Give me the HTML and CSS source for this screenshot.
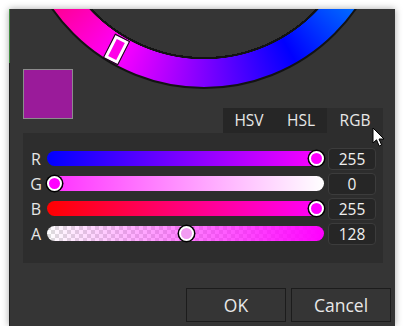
FILE: index.html
```html
<!DOCTYPE html>
<html>
<head>
<meta charset="utf-8">
<link rel="stylesheet" href="styles.css">
</head>
<body>
<div class="dialog">
  <div class="wheel-area">
    <div class="ring"></div>
    <div class="marker"></div>
  </div>
  <div class="head-row">
    <div class="swatch"></div>
    <div class="tabs">
      <div class="tab">HSV</div>
      <div class="tab">HSL</div>
      <div class="tab active">RGB</div>
    </div>
  </div>
  <div class="panel">
    <div class="row">
      <div class="lbl">R</div>
      <div class="track t-r"><span class="thumb" style="left: 269.5px"></span></div>
      <div class="val">255</div>
    </div>
    <div class="row">
      <div class="lbl">G</div>
      <div class="track t-g"><span class="thumb" style="left: 7.5px"></span></div>
      <div class="val">0</div>
    </div>
    <div class="row">
      <div class="lbl">B</div>
      <div class="track t-b"><span class="thumb" style="left: 269.5px"></span></div>
      <div class="val">255</div>
    </div>
    <div class="row">
      <div class="lbl">A</div>
      <div class="track t-a"><span class="thumb light" style="left: 139px"></span></div>
      <div class="val">128</div>
    </div>
  </div>
  <div class="footer">
    <button class="btn">OK</button>
    <button class="btn">Cancel</button>
  </div>
  <svg class="cursor" width="14" height="21" viewBox="0 0 14 21">
    <path d="M1 1 L1 16 L4.5 12.8 L7.2 19 L9.6 18 L7 12 L12 12 Z" fill="#fff" stroke="#000" stroke-width="1" stroke-linejoin="round"/>
  </svg>
</div>
</body>
</html>
```
FILE: styles.css
```css
html, body {
  margin: 0;
  padding: 0;
  background: #ffffff;
}
body {
  font-family: "Open Sans", "Noto Sans", sans-serif;
  color: #e6e6e6;
}
.dialog {
  position: relative;
  box-sizing: border-box;
  width: 386px;
  height: 317px;
  margin: 9px 0 0 9px;
  background: #353535;
  box-shadow: 0 0 7px rgba(0, 0, 0, 0.35);
  overflow: hidden;
}
.dialog::before {
  content: "";
  position: absolute;
  left: 0;
  top: 0;
  width: 1px;
  height: 100%;
  background: linear-gradient(to bottom, #3f8a3f 0 54px, #222 54px);
  z-index: 3;
}
.wheel-area {
  position: relative;
  display: flow-root;
  height: 60px;
}
.ring {
  box-sizing: border-box;
  width: 372px;
  height: 372px;
  margin: -292px 0 0 8.5px;
  border-radius: 50%;
  border: 2px solid #131313;
  background:
    radial-gradient(circle, #353535 0 154px, #131313 154px 156px, transparent 156.5px),
    conic-gradient(from -90deg, #ff0000, #ffff00, #00ff00, #00ffff, #0000ff, #ff00ff, #ff0000);
}
.marker {
  position: absolute;
  left: 100px;
  top: 28px;
  box-sizing: border-box;
  width: 15px;
  height: 25px;
  background: #ff00e8;
  border: 3px solid #ffffff;
  outline: 1.5px solid #111;
  transform: rotate(27deg);
}
.head-row {
  display: flex;
  justify-content: space-between;
  align-items: flex-end;
  height: 64px;
  padding: 0 12px 0 14px;
}
.swatch {
  align-self: flex-start;
  box-sizing: border-box;
  width: 50px;
  height: 50px;
  background: #9a1b9a;
  border: 1px solid #8c8c8c;
}
.tabs {
  display: flex;
  height: 25px;
  background: #262626;
}
.tab {
  width: 52px;
  font-size: 15.5px;
  line-height: 25px;
  text-align: center;
  color: #e8e8e8;
}
.tab.active {
  width: 56px;
  background: #2d2d2d;
}
.panel {
  box-sizing: border-box;
  height: 130px;
  margin: 0 12px 0 14px;
  padding: 13px 7px 0 0;
  background: #2d2d2d;
}
.row {
  display: grid;
  grid-template-columns: 20px 277px 48px;
  column-gap: 4px;
  align-items: center;
  height: 25px;
}
.lbl {
  padding-left: 6px;
  text-align: center;
  font-size: 16px;
  line-height: 20px;
  color: #e6e6e6;
}
.track {
  position: relative;
  height: 15px;
  border-radius: 7.5px;
}
.t-r { background: linear-gradient(to right, #0000ff, #ff00ff); }
.t-g { background: linear-gradient(to right, #ff2eff, #ffffff); }
.t-b { background: linear-gradient(to right, #ff0000, #ff00ff); }
.t-a {
  background:
    linear-gradient(to right, rgba(255, 0, 255, 0), rgba(255, 0, 255, 1)),
    repeating-conic-gradient(#ffffff 0 25%, #dedede 0 50%) 0 0 / 8px 8px;
}
.thumb {
  position: absolute;
  top: 50%;
  box-sizing: border-box;
  width: 15px;
  height: 15px;
  margin: -7.5px 0 0 -7.5px;
  border-radius: 50%;
  background: #ff00ff;
  border: 2px solid #ffffff;
  box-shadow: 0 0 0 1.5px #000;
}
.thumb.light { background: #f29cf2; }
.val {
  box-sizing: border-box;
  height: 22px;
  border: 1px solid #3c3c3c;
  border-radius: 4px;
  background: #262626;
  font-size: 15.5px;
  line-height: 20px;
  text-align: center;
  color: #f0f0f0;
}
.footer {
  display: flex;
  justify-content: flex-end;
  gap: 5px;
  padding: 25px 4px 0 0;
}
.btn {
  box-sizing: border-box;
  width: 100px;
  height: 34px;
  margin: 0;
  padding: 0;
  border: 1px solid #1c1c1c;
  background: #353535;
  color: #e8e8e8;
  font-family: "Open Sans", "Noto Sans", sans-serif;
  font-size: 17.5px;
}
.cursor {
  position: absolute;
  left: 363px;
  top: 118px;
  z-index: 4;
}
```
